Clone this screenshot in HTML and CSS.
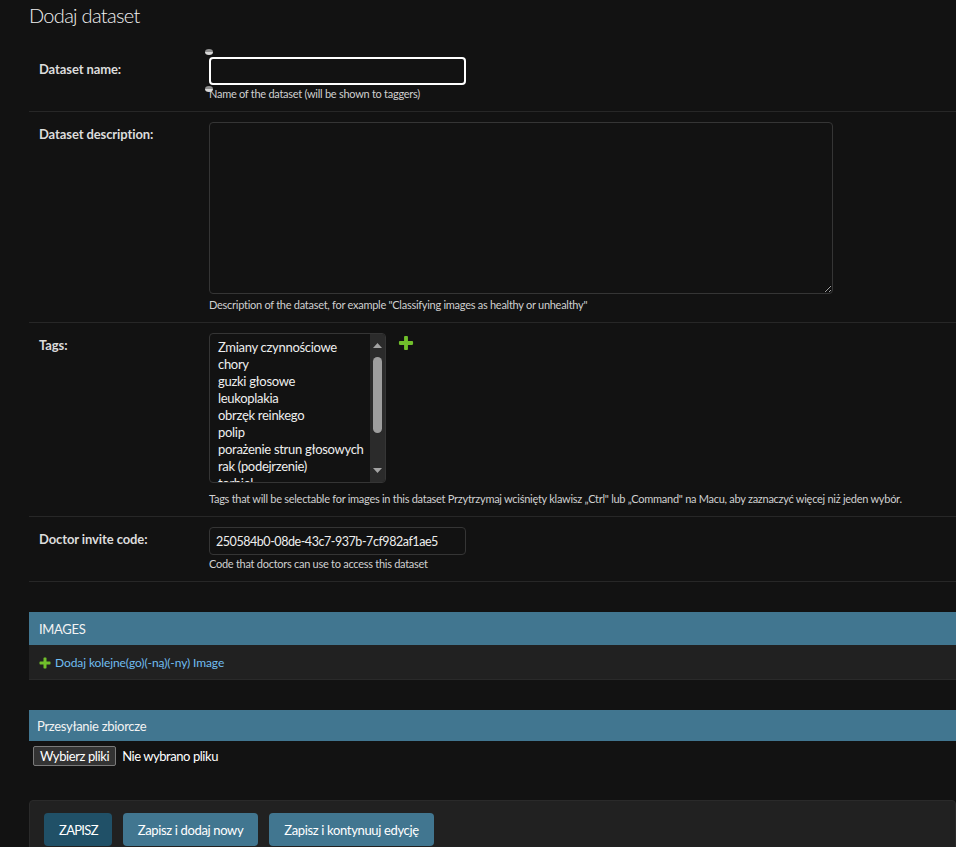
FILE: index.html
```html
<!DOCTYPE html>
<html lang="pl">
<head>
<meta charset="utf-8">
<title>Dodaj dataset</title>
<link rel="stylesheet" href="styles.css">
</head>
<body>
<div class="page">
  <h1 class="title">Dodaj dataset</h1>
  <form class="form">
    <fieldset class="module">
      <div class="row">
        <label class="row-label" for="id_name">Dataset name:</label>
        <div class="field">
          <span class="blob blob-top"></span>
          <input class="text-input focused" id="id_name" type="text">
          <div class="help help-input">Name of the dataset (will be shown to taggers)</div>
          <span class="blob blob-bottom"></span>
        </div>
      </div>
      <div class="row">
        <label class="row-label" for="id_desc">Dataset description:</label>
        <div class="field">
          <textarea class="textarea" id="id_desc"></textarea>
          <div class="help help-textarea">Description of the dataset, for example "Classifying images as healthy or unhealthy"</div>
        </div>
      </div>
      <div class="row">
        <label class="row-label">Tags:</label>
        <div class="field">
          <div class="tags-line">
            <div class="listbox">
              <div class="options">
                <div class="option">Zmiany czynnościowe</div>
                <div class="option">chory</div>
                <div class="option">guzki głosowe</div>
                <div class="option">leukoplakia</div>
                <div class="option">obrzęk reinkego</div>
                <div class="option">polip</div>
                <div class="option">porażenie strun głosowych</div>
                <div class="option">rak (podejrzenie)</div>
                <div class="option">torbiel</div>
              </div>
              <div class="scrollbar">
                <svg class="arrow arrow-up" width="9" height="5" viewBox="0 0 9 5"><path d="M4.5 0L9 5H0z" fill="#a3a3a3"/></svg>
                <span class="thumb"></span>
                <span class="spacer"></span>
                <svg class="arrow arrow-down" width="9" height="5" viewBox="0 0 9 5"><path d="M0 0H9L4.5 5z" fill="#a3a3a3"/></svg>
              </div>
            </div>
            <svg class="add-icon" width="18" height="18" viewBox="0 0 1792 1792"><path fill="#70bf2b" d="M1600 796v192q0 40-28 68t-68 28h-416v416q0 40-28 68t-68 28h-192q-40 0-68-28t-28-68v-416h-416q-40 0-68-28t-28-68v-192q0-40 28-68t68-28h416v-416q0-40 28-68t68-28h192q40 0 68 28t28 68v416h416q40 0 68 28t28 68z"/></svg>
          </div>
          <div class="help help-select">Tags that will be selectable for images in this dataset Przytrzymaj wciśnięty klawisz „Ctrl" lub „Command" na Macu, aby zaznaczyć więcej niż jeden wybór.</div>
        </div>
      </div>
      <div class="row">
        <label class="row-label" for="id_code">Doctor invite code:</label>
        <div class="field">
          <input class="text-input code-input" id="id_code" type="text" value="250584b0-08de-43c7-937b-7cf982af1ae5">
          <div class="help help-input">Code that doctors can use to access this dataset</div>
        </div>
      </div>
    </fieldset>

    <div class="inline-group">
      <h2 class="caption caption-images">IMAGES</h2>
      <div class="add-row">
        <svg class="add-small" width="14" height="14" viewBox="0 0 1792 1792"><path fill="#70bf2b" d="M1600 796v192q0 40-28 68t-68 28h-416v416q0 40-28 68t-68 28h-192q-40 0-68-28t-28-68v-416h-416q-40 0-68-28t-28-68v-192q0-40 28-68t68-28h416v-416q0-40 28-68t68-28h192q40 0 68 28t28 68v416h416q40 0 68 28t28 68z"/></svg>
        <a class="add-link" href="#">Dodaj kolejne(go)(-ną)(-ny) Image</a>
      </div>
    </div>

    <div class="bulk">
      <h2 class="caption caption-bulk">Przesyłanie zbiorcze</h2>
      <div class="file-line">
        <button type="button" class="file-btn">Wybierz pliki</button>
        <span class="file-status">Nie wybrano pliku</span>
      </div>
    </div>

    <div class="submit-row">
      <button type="button" class="btn btn-default">ZAPISZ</button>
      <button type="button" class="btn">Zapisz i dodaj nowy</button>
      <button type="button" class="btn">Zapisz i kontynuuj edycję</button>
    </div>
  </form>
</div>
</body>
</html>
```
FILE: styles.css
```css
* { box-sizing: border-box; }
html { color-scheme: dark; background: #121212; }
body {
  margin: 0;
  background: #121212;
  color: #eeeeee;
  font-family: Lato, "Open Sans", sans-serif;
  font-size: 13px;
}
.page { padding: 3px 0 0 29px; }
.title {
  margin: 0 0 20px;
  font-size: 20px;
  font-weight: 300;
  line-height: 24px;
  letter-spacing: -0.7px;
  color: #f0f0f0;
}
.form { margin: 0; }
.module { margin: 0; padding: 0; border: 0; min-width: 0; }
.row {
  display: flex;
  padding: 10px;
  border-bottom: 1px solid #272727;
}
.row-label {
  flex: 0 0 170px;
  padding: 4px 10px 0 0;
  font-weight: bold;
  font-size: 13px;
  line-height: 16px;
  letter-spacing: -0.1px;
  color: #dcdcdc;
}
.field {
  position: relative;
  display: flex;
  flex-direction: column;
  align-items: flex-start;
}
.text-input {
  width: 257px;
  height: 28px;
  margin: 0;
  padding: 0 6px;
  border: 1px solid #353535;
  border-radius: 4px;
  background: #121212;
  color: #eeeeee;
  font-family: Lato, "Open Sans", sans-serif;
  font-size: 13px;
  outline: none;
}
.text-input.focused { border: 2px solid #ffffff; }
.code-input {
  font-size: 12.5px;
  letter-spacing: -0.45px;
}
.help {
  font-size: 11px;
  line-height: 14px;
  letter-spacing: -0.27px;
  color: #d0d0d0;
}
.help-input { margin-top: 2px; }
.help-textarea { margin-top: 4px; }
.help-select { margin-top: 9px; }
.blob {
  position: absolute;
  left: -4px;
  width: 8px;
  height: 6px;
  border-radius: 50%;
  background: linear-gradient(#8e8e8e 55%, #d8d8d8 55%);
}
.blob-top { top: -8px; }
.blob-bottom { top: 29px; }
.textarea {
  display: block;
  width: 624px;
  height: 172px;
  margin: 0;
  border: 1px solid #353535;
  border-radius: 4px;
  background: #121212;
  color: #eeeeee;
  resize: both;
  font-family: Lato, "Open Sans", sans-serif;
}
.tags-line {
  display: flex;
  align-items: flex-start;
  gap: 11px;
}
.listbox {
  display: flex;
  width: 177px;
  height: 150px;
  border: 1px solid #353535;
  border-radius: 4px;
  overflow: hidden;
  background: #121212;
}
.options {
  flex: 1;
  min-width: 0;
  padding: 5px 0 0 8px;
  overflow: hidden;
}
.option {
  line-height: 17px;
  white-space: nowrap;
  font-size: 13px;
  letter-spacing: -0.3px;
  color: #eeeeee;
}
.scrollbar {
  flex: 0 0 15px;
  display: flex;
  flex-direction: column;
  align-items: center;
  background: #2b2b2b;
}
.arrow { display: block; flex: none; }
.arrow-up { margin-top: 9px; }
.arrow-down { margin-bottom: 9px; }
.thumb {
  flex: none;
  width: 9px;
  height: 76px;
  margin-top: 9px;
  border-radius: 5px;
  background: #9e9e9e;
}
.spacer { flex: 1; }
.add-icon { display: block; margin-top: 1px; }

.inline-group { margin-top: 30px; }
.caption {
  margin: 0;
  background: #417690;
  color: #f3f3f3;
  font-size: 13px;
  font-weight: normal;
  line-height: 17px;
  letter-spacing: -0.3px;
}
.caption-images { padding: 9px 10px 7px; }
.add-row {
  display: flex;
  align-items: center;
  gap: 3px;
  height: 35px;
  padding: 1px 9px 0;
  background: #212121;
  border-bottom: 1px solid #2a2a2a;
}
.add-small { display: block; }
.add-link {
  color: #70bdf0;
  text-decoration: none;
  font-size: 12px;
  letter-spacing: -0.1px;
}

.bulk { margin-top: 30px; }
.caption-bulk { padding: 8px 8px 6px; }
.file-line {
  display: flex;
  align-items: center;
  gap: 6px;
  margin-top: 5px;
  padding-left: 4px;
}
.file-btn {
  height: 20px;
  padding: 0 6px;
  border: 1px solid #7a7a7a;
  border-radius: 2px;
  background: #333333;
  color: #ffffff;
  font-family: Lato, "Open Sans", sans-serif;
  font-size: 13px;
  letter-spacing: -0.4px;
}
.file-status { color: #ffffff; font-size: 13px; letter-spacing: -0.45px; }

.submit-row {
  display: flex;
  gap: 11px;
  margin-top: 34px;
  padding: 12px 14px;
  background: #212121;
  border: 1px solid #2a2a2a;
  border-radius: 4px;
}
.btn {
  height: 33px;
  padding: 0 15px;
  border: 0;
  border-radius: 4px;
  background: #417690;
  color: #ffffff;
  font-family: Lato, "Open Sans", sans-serif;
  font-size: 13px;
  letter-spacing: -0.35px;
}
.btn-default { background: #205067; letter-spacing: -0.7px; padding: 0 14px 0 15px; }
```
